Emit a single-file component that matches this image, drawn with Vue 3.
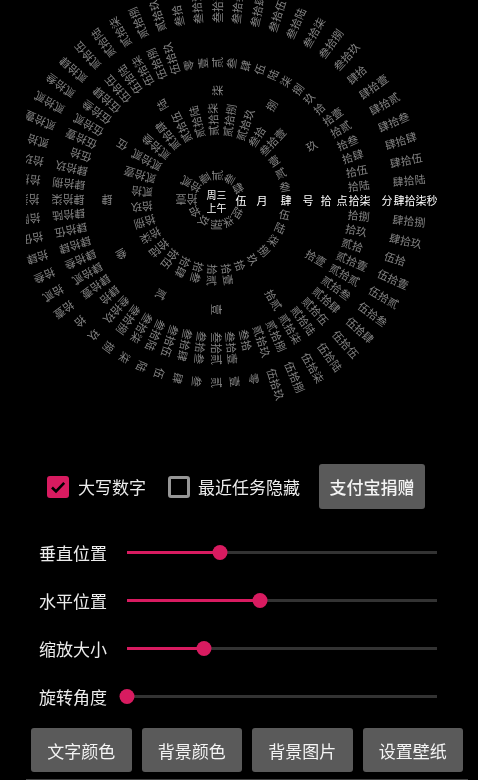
<script setup>
const digits = ['零', '壹', '贰', '叁', '肆', '伍', '陆', '柒', '捌', '玖']

function upper(n) {
  if (n < 10) return digits[n]
  const tens = Math.floor(n / 10)
  const ones = n % 10
  return (tens > 1 ? digits[tens] : '') + '拾' + (ones ? digits[ones] : '')
}

function ring(r, count, first, current, cls) {
  const items = []
  for (let i = 0; i < count; i++) {
    const value = first === 0 ? (current + i) % count : ((current - 1 + i) % count) + 1
    items.push({
      key: cls + i,
      text: upper(value),
      x: r,
      angle: (360 / count) * i,
      active: i === 0,
    })
  }
  return items
}

const items = [
  ...ring(19, 12, 1, 5, 'mo'),
  ...ring(64, 31, 1, 4, 'd'),
  ...ring(104, 12, 1, 10, 'h'),
  ...ring(132, 60, 0, 17, 'mi'),
  ...ring(177, 60, 0, 47, 's'),
]

const units = [
  { text: '月', x: 40 },
  { text: '号', x: 86 },
  { text: '点', x: 120 },
  { text: '分', x: 165 },
  { text: '秒', x: 210 },
]

const sliders = [
  { label: '垂直位置', value: 30 },
  { label: '水平位置', value: 42.9 },
  { label: '缩放大小', value: 24.9 },
  { label: '旋转角度', value: 0 },
]

const buttons = ['文字颜色', '背景颜色', '背景图片', '设置壁纸']
</script>

<template>
  <div class="page">
    <svg class="clock" width="442" height="464">
      <g transform="translate(190.5 200)">
        <text
          v-for="item in items"
          :key="item.key"
          :class="['ring', { active: item.active }]"
          :x="item.x"
          y="0"
          :transform="`rotate(${item.angle})`"
        >{{ item.text }}</text>
        <text v-for="u in units" :key="u.text" class="ring active" :x="u.x" y="0">{{ u.text }}</text>
        <text class="center" x="0" y="-6">周三</text>
        <text class="center" x="0" y="7">上午</text>
      </g>
    </svg>

    <div class="options">
      <span class="box checked">
        <svg width="22" height="22" viewBox="0 0 22 22">
          <path d="M5 11.5l4 4 8.2-8.6" fill="none" stroke="#000" stroke-width="2.6" />
        </svg>
      </span>
      <span class="option-label first">大写数字</span>
      <span class="box"></span>
      <span class="option-label second">最近任务隐藏</span>
      <button class="btn donate">支付宝捐赠</button>
    </div>

    <div class="sliders">
      <div v-for="s in sliders" :key="s.label" class="slider-row">
        <span class="slider-label">{{ s.label }}</span>
        <div class="track">
          <div class="fill" :style="{ width: s.value + '%' }"></div>
          <div class="thumb" :style="{ left: s.value + '%' }"></div>
        </div>
      </div>
    </div>

    <div class="actions">
      <button v-for="b in buttons" :key="b" class="btn action">{{ b }}</button>
    </div>
  </div>
</template>

<style>
html, body {
  margin: 0;
  background: #000;
}
</style>

<style scoped>
.page {
  width: 442px;
  height: 780px;
  margin-left: 26px;
  overflow: hidden;
  font-family: "Noto Sans CJK SC", "Liberation Sans", sans-serif;
  color: #ececec;
  opacity: 0.999;
}
.clock {
  display: block;
  filter: grayscale(1);
}
.ring {
  font-size: 11px;
  fill: #848484;
  dominant-baseline: central;
}
.ring.active {
  fill: #fff;
}
.center {
  font-size: 10px;
  fill: #fff;
  text-anchor: middle;
  dominant-baseline: central;
}
.options {
  display: flex;
  align-items: center;
  height: 45px;
  padding-left: 21px;
  font-size: 17px;
}
.box {
  box-sizing: border-box;
  width: 22px;
  height: 22px;
  border: 3px solid #969696;
  border-radius: 3px;
  flex: none;
}
.box.checked {
  border: 0;
  background: #d81b60;
}
.box svg {
  display: block;
}
.option-label.first {
  margin-left: 9px;
  margin-right: 22px;
}
.option-label.second {
  margin-left: 8px;
  margin-right: 19px;
}
.btn {
  border: 0;
  border-radius: 3px;
  background: #5a5a5a;
  color: #f4f4f4;
  font-family: inherit;
  font-size: 17px;
  padding: 0;
}
.donate {
  width: 106px;
  height: 45px;
  font-weight: 500;
}
.sliders {
  margin-top: 19px;
}
.slider-row {
  display: flex;
  align-items: center;
  height: 48px;
  padding-left: 13px;
  font-size: 17px;
}
.slider-label {
  width: 88px;
  flex: none;
}
.track {
  position: relative;
  width: 310px;
  height: 3px;
  background: #333;
}
.fill {
  height: 100%;
  background: #d81b60;
}
.thumb {
  position: absolute;
  top: -6px;
  width: 15px;
  height: 15px;
  transform: translateX(-50%);
  border-radius: 50%;
  background: #d81b60;
}
.actions {
  display: flex;
  gap: 10px;
  margin-top: 8px;
  padding: 0 5px 7px;
  border-bottom: 1px solid #444;
}
.action {
  width: 101px;
  height: 44px;
}
</style>
